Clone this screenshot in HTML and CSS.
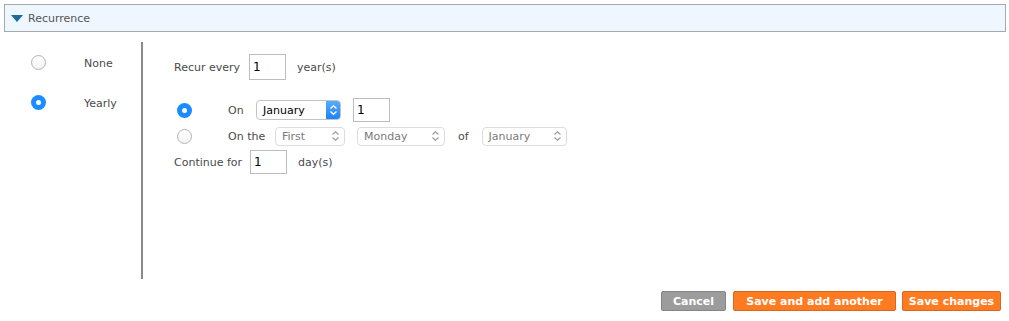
FILE: index.html
```html
<!DOCTYPE html>
<html lang="en">
<head>
  <meta charset="UTF-8" />
  <title>Recurrence</title>
  <link rel="stylesheet" href="styles.css">
</head>
<body>

  <div class="panel-head">
    <span class="caret"></span>
    Recurrence
  </div>

  <div class="recurrence">
    <div class="kinds">
      <div class="kind">
        <span class="radio"></span>
        <span class="kind-label">None</span>
      </div>
      <div class="kind">
        <span class="radio checked"></span>
        <span class="kind-label">Yearly</span>
      </div>
    </div>

    <div class="options">
      <div class="row row-every">
        <span class="lbl lbl-every">Recur every</span>
        <span class="num">1</span>
        <span class="unit">year(s)</span>
      </div>

      <div class="row row-on">
        <span class="radio checked"></span>
        <span class="lbl lbl-on">On</span>
        <div class="select active">
          <span>January</span>
          <span class="stepper">
            <svg width="9" height="12" viewBox="0 0 9 12"><path d="M1.5 4.5 L4.5 1.8 L7.5 4.5 M1.5 7.5 L4.5 10.2 L7.5 7.5" fill="none" stroke="#fff" stroke-width="1.4"/></svg>
          </span>
        </div>
        <span class="num num-day">1</span>
      </div>

      <div class="row row-onthe">
        <span class="radio"></span>
        <span class="lbl lbl-onthe">On the</span>
        <div class="select off w-first">
          <span>First</span>
          <svg width="9" height="12" viewBox="0 0 9 12"><path d="M1.5 4.5 L4.5 1.8 L7.5 4.5 M1.5 7.5 L4.5 10.2 L7.5 7.5" fill="none" stroke="#999" stroke-width="1.1"/></svg>
        </div>
        <div class="select off w-monday">
          <span>Monday</span>
          <svg width="9" height="12" viewBox="0 0 9 12"><path d="M1.5 4.5 L4.5 1.8 L7.5 4.5 M1.5 7.5 L4.5 10.2 L7.5 7.5" fill="none" stroke="#999" stroke-width="1.1"/></svg>
        </div>
        <span class="lbl lbl-of">of</span>
        <div class="select off w-month">
          <span>January</span>
          <svg width="9" height="12" viewBox="0 0 9 12"><path d="M1.5 4.5 L4.5 1.8 L7.5 4.5 M1.5 7.5 L4.5 10.2 L7.5 7.5" fill="none" stroke="#999" stroke-width="1.1"/></svg>
        </div>
      </div>

      <div class="row row-continue">
        <span class="lbl lbl-continue">Continue for</span>
        <span class="num">1</span>
        <span class="unit">day(s)</span>
      </div>
    </div>
  </div>

  <div class="actions">
    <button class="btn btn-cancel">Cancel</button>
    <button class="btn btn-save">Save and add another</button>
    <button class="btn btn-save">Save changes</button>
  </div>

</body>
</html>
```

FILE: styles.css
```css
:root {
  --text: #4a4a4a;
  --line: #8a8a8a;
  --blue: #1a8cff;
  --orange: #ff7b22;
}

* {
  box-sizing: border-box;
}

body {
  margin: 0;
  font-family: "DejaVu Sans", Verdana, sans-serif;
  font-size: 11px;
  color: var(--text);
  background: #fff;
}

.panel-head {
  margin: 4px 3px 0 4px;
  height: 28px;
  border: 1px solid #a8a8a8;
  background: #eef7ff;
  display: flex;
  align-items: center;
  padding-left: 6px;
  font-size: 11px;
  color: #555;
}

.caret {
  width: 0;
  height: 0;
  border-left: 6px solid transparent;
  border-right: 6px solid transparent;
  border-top: 7px solid #1b6d99;
  margin-right: 5px;
}

.recurrence {
  display: flex;
  margin-top: 10px;
  height: 237px;
}

.kinds {
  width: 143px;
  border-right: 2px solid var(--line);
  padding: 10px 0 0 31px;
  display: flex;
  flex-direction: column;
  gap: 20px;
}

.kind {
  display: flex;
  align-items: center;
  height: 20px;
}

.kind-label {
  margin-left: 38px;
  padding-top: 3px;
}

.radio {
  width: 15px;
  height: 15px;
  border-radius: 50%;
  border: 1px solid #b3b3b3;
  background: linear-gradient(#fff, #f3f3f3);
  flex: none;
}

.radio.checked {
  border: none;
  background: var(--blue);
  position: relative;
}

.radio.checked::after {
  content: "";
  position: absolute;
  left: 5px;
  top: 5px;
  width: 5px;
  height: 5px;
  border-radius: 50%;
  background: #fff;
}

.options {
  padding: 12px 0 0 31px;
  display: flex;
  flex-direction: column;
}

.row {
  display: flex;
  align-items: center;
}

.row-every {
  height: 26px;
}

.row-on {
  height: 24px;
  margin-top: 18px;
  padding-left: 3px;
}

.row-onthe {
  height: 20px;
  margin-top: 4px;
  padding-left: 3px;
}

.row-continue {
  height: 24px;
  margin-top: 4px;
}

.lbl-every {
  width: 75px;
}

.lbl-continue {
  width: 76px;
}

.lbl-on {
  margin-left: 36px;
  width: 28px;
}

.lbl-onthe {
  margin-left: 36px;
  width: 47px;
}

.lbl-of {
  margin: 0 13px;
}

.unit {
  margin-left: 11px;
}

.num {
  width: 37px;
  height: 26px;
  border: 1px solid #bdbdbd;
  padding: 5px 0 0 3px;
  color: #000;
  font-size: 12px;
}

.row-on .num,
.row-continue .num {
  height: 24px;
  padding-top: 4px;
}

.num-day {
  margin-left: 12px;
}

.select {
  display: flex;
  align-items: center;
  justify-content: space-between;
  border-radius: 4px;
  padding-left: 6px;
}

.select.active {
  width: 85px;
  height: 20px;
  border: 1px solid #c4c4c4;
  color: #000;
  overflow: hidden;
}

.stepper {
  width: 15px;
  height: 20px;
  background: linear-gradient(#5aaeff, #1a80f6);
  display: flex;
  align-items: center;
  justify-content: center;
  margin-right: -1px;
}

.select.off {
  height: 19px;
  border: 1px solid #dcdcdc;
  color: #7a7a7a;
  padding-right: 4px;
  background: #fff;
}

.w-first {
  width: 70px;
}

.w-monday {
  width: 88px;
  margin-left: 12px;
}

.w-month {
  width: 85px;
}

.actions {
  display: flex;
  justify-content: flex-end;
  gap: 6px;
  margin-top: 12px;
  padding-right: 8px;
}

.btn {
  height: 20px;
  border-radius: 2px;
  font-family: "DejaVu Sans", Verdana, sans-serif;
  font-weight: bold;
  font-size: 11px;
  color: #fff;
  padding: 0;
}

.btn-cancel {
  width: 65px;
  background: #9c9c9c;
  border: 1px solid #858585;
  margin-right: 1px;
}

.btn-save {
  background: var(--orange);
  border: 1px solid #d9661c;
}

.btn-save:nth-child(2) {
  width: 163px;
}

.btn-save:nth-child(3) {
  width: 99px;
}
```
